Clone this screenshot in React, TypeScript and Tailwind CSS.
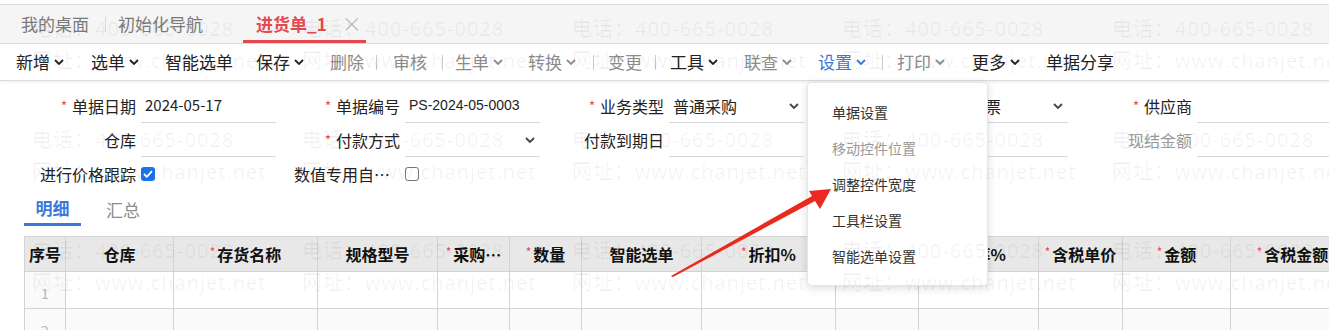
import React from "react";

const RED = "text-[#e5484d]";

function Chev({ className = "" }: { className?: string }) {
  return (
    <svg width="10" height="6" viewBox="0 0 10 6" className={className}>
      <path d="M1 1l4 4 4-4" fill="none" stroke="currentColor" strokeWidth="1.8" />
    </svg>
  );
}

type Tool = { t?: string; tone?: "d" | "g" | "b"; ch?: boolean; w: string; sep?: boolean };

const tools: Tool[] = [
  { t: "新增", tone: "d", ch: true, w: "w-[75px]" },
  { t: "选单", tone: "d", ch: true, w: "w-[74px]" },
  { t: "智能选单", tone: "d", w: "w-[91px]" },
  { t: "保存", tone: "d", ch: true, w: "w-[74px]" },
  { t: "删除", tone: "g", w: "w-[46px]" },
  { sep: true, w: "w-[17px]" },
  { t: "审核", tone: "g", w: "w-[49px]" },
  { sep: true, w: "w-[13px]" },
  { t: "生单", tone: "g", ch: true, w: "w-[73px]" },
  { t: "转换", tone: "g", ch: true, w: "w-[65px]" },
  { sep: true, w: "w-[15px]" },
  { t: "变更", tone: "g", w: "w-[47px]" },
  { sep: true, w: "w-[15px]" },
  { t: "工具", tone: "d", ch: true, w: "w-[74px]" },
  { t: "联查", tone: "g", ch: true, w: "w-[74px]" },
  { t: "设置", tone: "b", ch: true, w: "w-[64px]" },
  { sep: true, w: "w-[15px]" },
  { t: "打印", tone: "g", ch: true, w: "w-[75px]" },
  { t: "更多", tone: "d", ch: true, w: "w-[74px]" },
  { t: "单据分享", tone: "d", w: "w-[90px]" },
];

const toneCls = { d: "text-[#222]", g: "text-[#8c8c8c]", b: "text-[#3b78d8]" };

function Field({
  label,
  req,
  value,
  select,
  gray,
  valueCls = "text-[16px]",
}: {
  label: string;
  req?: boolean;
  value?: string;
  select?: boolean;
  gray?: boolean;
  valueCls?: string;
}) {
  return (
    <div className="flex w-[264px] shrink-0 h-full">
      <div
        className={`w-[124px] flex items-center justify-end text-[16px] ${gray ? "text-[#9a9a9a]" : "text-[#222]"}`}
      >
        {req && <span className={`${RED} text-[13px] mr-[5px]`}>*</span>}
        {label}
      </div>
      <div className="ml-[5px] w-[135px] shrink-0 border-b border-[#d6d6d6] flex items-center justify-between pl-[4px] pr-[5px] text-[#222]">
        <span className={valueCls}>{value}</span>
        {select && <Chev className="text-[#444]" />}
      </div>
    </div>
  );
}

function Box({ checked }: { checked?: boolean }) {
  return checked ? (
    <div className="w-[14px] h-[14px] rounded-[3px] bg-[#1a73e8] flex items-center justify-center">
      <svg width="10" height="8" viewBox="0 0 10 8">
        <path d="M1 4l2.8 2.8L9 1.2" fill="none" stroke="white" strokeWidth="1.8" />
      </svg>
    </div>
  ) : (
    <div className="w-[14px] h-[14px] rounded-[3px] border border-[#767676] bg-white" />
  );
}

const cols = [
  { w: "w-[41px]", t: "序号" },
  { w: "w-[108px]", t: "仓库" },
  { w: "w-[144px]", t: "存货名称", r: true },
  { w: "w-[120px]", t: "规格型号" },
  { w: "w-[72px]", t: "采购…", r: true },
  { w: "w-[72px]", t: "数量", r: true },
  { w: "w-[120px]", t: "智能选单" },
  { w: "w-[134px]", t: "折扣%", r: true },
  { w: "w-[83px]", t: "折后单价", r: true },
  { w: "w-[120px]", t: "税率%", r: true },
  { w: "w-[84px]", t: "含税单价", r: true },
  { w: "w-[108px]", t: "金额", r: true },
  { w: "w-[124px]", t: "含税金额", r: true },
];

const menu = [
  { t: "单据设置" },
  { t: "移动控件位置", g: true },
  { t: "调整控件宽度" },
  { t: "工具栏设置" },
  { t: "智能选单设置" },
];

export default function App() {
  return (
    <div className="relative w-[1329px] h-[330px] overflow-hidden bg-white font-['Noto_Sans_CJK_SC','Microsoft_YaHei',sans-serif]">
      <div className="h-[4px]" />
      {/* page tabs */}
      <div className="h-[40px] bg-[#f5f5f5] border-t border-b border-[#dedede] flex items-stretch text-[17px]">
        <div className="w-[105px] pl-[21px] flex items-center text-[#7a7a7a]">我的桌面</div>
        <div className="w-px h-[16px] self-center bg-[#d9d9d9]" />
        <div className="w-[137px] pl-[12px] flex items-center text-[#7a7a7a]">初始化导航</div>
        <div className="w-[123px] pl-[13px] flex items-center border-b-[3px] border-[#e5484d] pt-[3px]">
          <span className="text-[#e5484d] font-bold">进货单_1</span>
          <span className="ml-[15px] text-[#b0b0b0] text-[20px] leading-none font-light">×</span>
        </div>
      </div>

      {/* toolbar */}
      <div className="h-[37px] bg-white border-b border-[#dcdcdc] shadow-[0_1px_3px_rgba(0,0,0,0.08)] flex items-center pl-[16px] text-[17px]">
        {tools.map((it, i) =>
          it.sep ? (
            <div key={i} className={`${it.w} h-full flex items-center`}>
              <div className="w-px h-[15px] bg-[#c8c8c8]" />
            </div>
          ) : (
            <div key={i} className={`${it.w} shrink-0 flex items-center ${toneCls[it.tone!]}`}>
              <span>{it.t}</span>
              {it.ch && <Chev className="ml-[4px]" />}
            </div>
          )
        )}
      </div>

      {/* header form */}
      <div className="pl-[12px] mt-[8px] flex flex-col">
        <div className="flex h-[34px]">
          <Field label="单据日期" req value="2024-05-17" valueCls="text-[15px]" />
          <Field label="单据编号" req value="PS-2024-05-0003" valueCls="text-[14px] font-['Liberation_Sans',sans-serif]" />
          <Field label="业务类型" req value="普通采购" select />
          <Field label="票据类型" req value="普通发票" select />
          <Field label="供应商" req />
        </div>
        <div className="flex h-[34px]">
          <Field label="仓库" />
          <Field label="付款方式" req select />
          <Field label="付款到期日" />
          <Field label="结算方式" />
          <Field label="现结金额" gray />
        </div>
        <div className="flex h-[33px]">
          <div className="flex w-[264px] h-full items-center">
            <div className="w-[124px] text-right text-[16px] text-[#222]">进行价格跟踪</div>
            <div className="ml-[5px]">
              <Box checked />
            </div>
          </div>
          <div className="flex w-[264px] h-full items-center">
            <div className="w-[124px] text-right text-[16px] text-[#222] pr-[10px] whitespace-nowrap">数值专用自…</div>
            <div className="ml-[5px]">
              <Box />
            </div>
          </div>
        </div>
      </div>

      {/* detail tabs */}
      <div className="flex pl-[24px] h-[36px] text-[17px]">
        <div className="w-[57px] flex items-center justify-center border-b-[3px] border-[#3b78d8] text-[#3b78d8] font-bold pt-[3px]">
          明细
        </div>
        <div className="ml-[25px] flex items-center text-[#8c8c8c] pt-[3px]">汇总</div>
      </div>

      {/* grid */}
      <div className="ml-[24px] mt-[10px] flex flex-col border-l border-t border-[#d3d3d3] w-max">
        <div className="flex h-[35px] bg-[#e8e8e8]">
          {cols.map((c, i) => (
            <div
              key={i}
              className={`${c.w} shrink-0 border-r border-b border-[#d3d3d3] flex items-center justify-center text-[16px] font-bold text-[#111] whitespace-nowrap`}
            >
              {c.r && <span className={`${RED} text-[12px] font-normal mr-[2px] -mt-[4px]`}>*</span>}
              {c.t}
            </div>
          ))}
        </div>
        {[1, 2].map((n) => (
          <div key={n} className={`flex h-[37px] ${n === 2 ? "bg-[#fafafa]" : "bg-white"}`}>
            {cols.map((c, i) => (
              <div
                key={i}
                className={`${c.w} shrink-0 border-r border-b border-[#d3d3d3] flex items-center justify-center text-[14px] text-[#b5b5b5] ${i === 0 ? "bg-[#fafafa] pt-[6px]" : ""}`}
              >
                {i === 0 ? n : ""}
              </div>
            ))}
          </div>
        ))}
      </div>

      {/* settings dropdown */}
      <div className="absolute left-[807px] top-[82px] w-[181px] h-[204px] bg-white rounded-[4px] border border-[#e6e6e6] shadow-[0_2px_8px_rgba(0,0,0,0.15)] pt-[11px] flex flex-col text-[14px]">
        {menu.map((m) => (
          <div key={m.t} className={`h-[36px] pl-[24px] flex items-center ${m.g ? "text-[#9a9a9a]" : "text-[#333]"}`}>
            {m.t}
          </div>
        ))}
      </div>

      {/* annotation arrow */}
      <svg className="absolute left-0 top-0 pointer-events-none" width="1329" height="330">
        <polygon
          points="671,276 812,196 809,191 831,189 820,209 815,201 673,277"
          fill="#ea2a1e"
        />
      </svg>

      {/* watermark */}
      <div className="absolute inset-0 pointer-events-none overflow-hidden">
        {[0, 1, 2].map((r) =>
          [0, 1, 2, 3, 4].map((c) => (
            <div
              key={`${r}-${c}`}
              className="absolute flex flex-col font-['Open_Sans','Noto_Sans_CJK_SC',sans-serif] text-[20px] tracking-[1px] text-[rgba(0,0,0,0.06)] whitespace-nowrap leading-[24px]"
              style={{ left: 32 + c * 270, top: 17 + r * 111 }}
            >
              <span>电话：400-665-0028</span>
              <span className="mt-[8px]">网址：www.chanjet.net</span>
            </div>
          ))
        )}
      </div>
    </div>
  );
}
